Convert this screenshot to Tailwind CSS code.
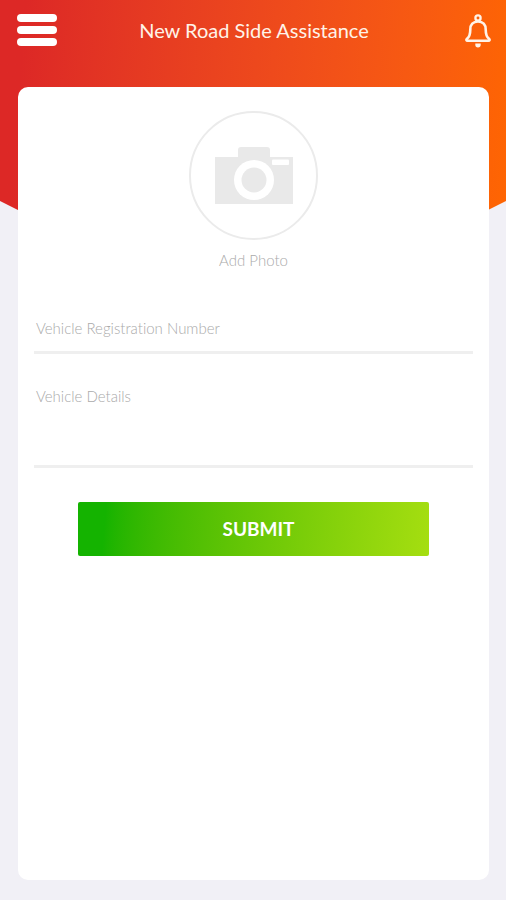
<!DOCTYPE html>
<html lang="en">
<head>
<meta charset="utf-8">
<meta name="viewport" content="width=device-width, initial-scale=1">
<title>New Road Side Assistance</title>
<script src="https://cdn.jsdelivr.net/npm/@tailwindcss/browser@4"></script>
</head>
<body class="relative isolate flex min-h-screen flex-col bg-[#f1f0f6] font-['Lato',sans-serif]">
  <!-- Chevron-shaped backdrop -->
  <div class="absolute inset-x-0 top-0 -z-10 h-82 bg-linear-95 from-[#dd2826] from-5% to-[#ff6600] [clip-path:polygon(0_0,100%_0,100%_201px,50%_100%,0_201px)]"></div>

  <header class="flex h-15 shrink-0 items-center justify-between pr-[15px] pl-[17px]">
    <button type="button" aria-label="Menu" class="flex w-10 flex-col gap-1">
      <span class="h-2 w-full rounded-full bg-white"></span>
      <span class="h-2 w-full rounded-full bg-white"></span>
      <span class="h-2 w-full rounded-full bg-white"></span>
    </button>
    <h1 class="text-xl text-[#fff3e8]">New Road Side Assistance</h1>
    <button type="button" aria-label="Notifications" class="flex w-10 justify-end">
      <svg class="h-9 w-[26px]" viewBox="0 0 26 36" fill="none" stroke="#fff3e8" stroke-width="2.600" stroke-linejoin="round" stroke-linecap="round">
        <circle cx="13" cy="6" r="2.600" stroke-width="2.300"/>
        <path d="M13 9.500c-5 0-7.700 3.300-7.700 8 0 5-.7 7.300-3.300 9.300-1 .8-.7 2 .6 2h20.800c1.300 0 1.600-1.200.6-2-2.600-2-3.300-4.300-3.300-9.300 0-4.700-2.700-8-7.700-8z"/>
        <path d="M10.300 31.500h5.400v1.200c0 1.800-1 2.800-2.700 2.800s-2.700-1-2.700-2.800z" fill="#fff3e8" stroke="none"/>
      </svg>
    </button>
  </header>

  <main class="mt-[27px] mr-[17px] mb-5 ml-[18px] flex flex-1 flex-col rounded-[10px] bg-white px-4 pt-6">
    <form class="flex flex-col text-[15px] leading-6 font-light text-[#aaaaaa] [font-variant-ligatures:none]">
      <button type="button" class="flex flex-col items-center self-center">
        <span class="flex size-[129px] items-center justify-center rounded-full border-2 border-[#ebebeb]">
          <svg class="h-[58px] w-[78px]" viewBox="0 0 78 58" aria-hidden="true">
            <path d="M0 10h23V3q0-3 3-3h26q3 0 3 3v7h23v47H0z" fill="#e9e9e9"/>
            <rect x="57" y="12.500" width="17" height="5.500" rx="1" fill="#fff"/>
            <circle cx="39" cy="33" r="20" fill="#fff"/>
            <circle cx="39" cy="33" r="12.500" fill="#e9e9e9"/>
          </svg>
        </span>
        <span class="mt-2">Add Photo</span>
      </button>

      <!-- Each label shares its field's cell and hides once the field has text -->
      <div class="mt-11 grid">
        <input id="registration" type="text" placeholder=" " class="peer col-start-1 row-start-1 h-[38px] w-full border-b-3 border-[#efefef] px-0.5 pb-2 text-gray-600 outline-none">
        <label for="registration" class="pointer-events-none invisible col-start-1 row-start-1 self-start px-0.5 peer-placeholder-shown:visible">Vehicle Registration Number</label>
      </div>

      <div class="mt-[30px] grid">
        <textarea id="details" placeholder=" " class="peer col-start-1 row-start-1 h-21 w-full resize-none border-b-3 border-[#efefef] px-0.5 text-gray-600 outline-none"></textarea>
        <label for="details" class="pointer-events-none invisible col-start-1 row-start-1 self-start px-0.5 peer-placeholder-shown:visible">Vehicle Details</label>
      </div>

      <button type="submit" class="mx-auto mt-[34px] h-[54px] w-4/5 rounded-xs bg-linear-95 from-[#14b300] from-8% to-[#a5de10] pl-2.5 text-[19px] font-bold text-white">SUBMIT</button>
    </form>
  </main>
</body>
</html>
